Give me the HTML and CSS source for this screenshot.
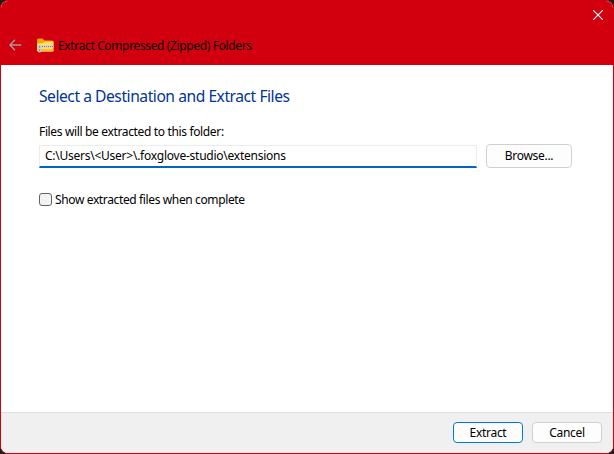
FILE: index.html
```html
<!DOCTYPE html>
<html lang="en">
<head>
<meta charset="utf-8">
<title>Extract Compressed (Zipped) Folders</title>
<link rel="stylesheet" href="styles.css">
</head>
<body>
<div class="window">
  <header class="titlebar">
    <div class="caption">
      <svg class="close" width="10" height="10" viewBox="0 0 10 10"><path d="M.2.2 9.8 9.8M9.8.2.2 9.8"/></svg>
    </div>
    <div class="nav">
      <svg class="back" width="13" height="12" viewBox="0 0 13 12"><path d="M12.3 6H1M6 .8.9 6 6 11.2"/></svg>
      <svg class="zip" width="17" height="15" viewBox="0 0 17 15">
        <path d="M0 2Q0 .5 1.5.5H5.5L7.5 2.5H15Q16.5 2.5 16.5 4V8H0z" fill="#f0a30a"/>
        <path d="M0 5.2H6L7.5 3.5H16.5V12.5Q16.5 13.5 15.5 13.5H1Q0 13.5 0 12.5z" fill="#ffdc68"/>
        <path d="M3 11H16.5V12.5Q16.5 13.5 15.5 13.5H3z" fill="#f6bd35"/>
        <path d="M2 7.5H16.5V10H2z" fill="#d9d4bd"/>
        <path d="M3 8.5H16.5" stroke="#777" stroke-dasharray="1 1"/>
        <path d="M1.2 7.5H4V13Q4 14.5 2.6 14.5T1.2 13z" fill="#c9ced3"/>
        <path d="M2.6 8V9.5M2.6 11.5V13" stroke="#68717a"/>
      </svg>
      <span class="name">Extract Compressed (Zipped) Folders</span>
    </div>
  </header>
  <main class="content">
    <h1>Select a Destination and Extract Files</h1>
    <label class="label" for="dest">Files will be extracted to this folder:</label>
    <div class="row">
      <div class="field" id="dest"><span>C:\Users\&lt;User&gt;\.foxglove-studio\extensions</span></div>
      <button class="btn browse">Browse...</button>
    </div>
    <div class="check"><i class="box"></i><span>Show extracted files when complete</span></div>
  </main>
  <footer class="footer">
    <button class="btn primary">Extract</button>
    <button class="btn">Cancel</button>
  </footer>
</div>
</body>
</html>
```
FILE: styles.css
```css
* { box-sizing: border-box; }
body {
  margin: 0;
  background: #1c1c1c;
  font: 12px/16px "Noto Sans", "Open Sans", sans-serif;
  color: #000;
}
.window {
  display: flex;
  flex-direction: column;
  width: 614px;
  height: 454px;
  border: 1px solid #d2000f;
  border-radius: 8px;
  overflow: hidden;
  background: #fff;
}
.titlebar { height: 64px; flex: none; background: #d2000f; }
.caption { display: flex; justify-content: flex-end; height: 28px; padding: 9px 10px 0 0; }
.close path { stroke: #fff; stroke-width: 1.1; fill: none; }
.nav { display: flex; align-items: center; height: 32px; padding-left: 8px; }
.back path { stroke: #a99999; stroke-width: 1.4; fill: none; }
.zip { margin-left: 15px; }
.name { margin: 2px 0 0 4px; letter-spacing: -.36px; white-space: nowrap; }
.content { flex: 1; padding: 20px 41px 0 38px; }
h1 {
  margin: 0;
  font-size: 15.6px;
  line-height: 22px;
  font-weight: 400;
  color: #003399;
  letter-spacing: -.45px;
  white-space: nowrap;
}
.label { display: block; margin-top: 17px; letter-spacing: -.35px; }
.row { display: flex; gap: 9px; margin-top: 4px; }
.field {
  width: 438px;
  height: 23px;
  margin-top: 1px;
  padding: 2px 5px 0;
  border: 1px solid #ececec;
  border-bottom: 2px solid #0067c0;
  letter-spacing: -.25px;
  white-space: nowrap;
}
.btn {
  width: 70px;
  height: 21px;
  padding: 0;
  border: 1px solid #d0d0d0;
  border-radius: 4px;
  background: #fdfdfd;
  font: inherit;
  color: #000;
  letter-spacing: -.3px;
}
.browse { width: 86px; height: 24px; }
.check { display: flex; align-items: center; margin-top: 24px; letter-spacing: -.37px; }
.box {
  width: 13px;
  height: 13px;
  margin: -1px 3px 0 0;
  border: 1px solid #626262;
  border-radius: 3px;
  background: #f3f3f3;
}
.footer {
  display: flex;
  justify-content: flex-end;
  gap: 9px;
  flex: none;
  height: 41px;
  padding: 9px 11px 0 0;
  border-top: 1px solid #dfdfdf;
  background: #f0f0f0;
}
.primary { border-color: #0078d4; }
```
